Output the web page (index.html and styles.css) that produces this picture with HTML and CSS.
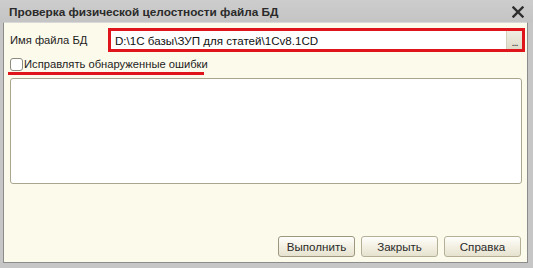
FILE: index.html
```html
<!DOCTYPE html>
<html lang="ru">
<head>
<meta charset="utf-8">
<title>Проверка физической целостности файла БД</title>
<link rel="stylesheet" href="styles.css">
</head>
<body>
<div class="window">
  <div class="titlebar">
    <span class="title">Проверка физической целостности файла БД</span>
    <svg class="close" width="12" height="12" viewBox="0 0 12 12"><path d="M1.5 1.5 L10.5 10.5 M10.5 1.5 L1.5 10.5" stroke="#2e2e2e" stroke-width="2.4" stroke-linecap="square"/></svg>
  </div>
  <div class="client">
    <div class="row file-row">
      <span class="label">Имя файла БД</span>
      <div class="input">
        <span class="value">D:\1C базы\ЗУП для статей\1Cv8.1CD</span>
        <span class="pick">...</span>
      </div>
    </div>
    <div class="row check-row">
      <span class="checkbox"></span>
      <span class="check-label">Исправлять обнаруженные ошибки</span>
    </div>
    <div class="underline"></div>
    <div class="textbox"></div>
    <div class="buttons">
      <button class="btn btn-default">Выполнить</button>
      <button class="btn">Закрыть</button>
      <button class="btn">Справка</button>
    </div>
  </div>
</div>
</body>
</html>
```

FILE: styles.css
```css
html, body {
  margin: 0;
  padding: 0;
}
body {
  background: #c6c6c6;
  font-family: "Liberation Sans", Arial, sans-serif;
  font-size: 11px;
  color: #1c1c1c;
}
.window {
  width: 533px;
  height: 268px;
  display: flex;
  flex-direction: column;
  background: #c6c6c6;
}
.titlebar {
  height: 22px;
  flex: none;
  display: flex;
  align-items: center;
  justify-content: space-between;
  padding: 0 9px 0 9px;
  background: linear-gradient(#cdcdcd, #c4c4c4);
}
.title {
  font-weight: bold;
  font-size: 11.8px;
  color: #2a2a2a;
  padding-top: 1px;
}
.close {
  display: block;
  margin-top: 1px;
}
.client {
  flex: 1;
  margin: 0 5px 5px 3px;
  border: 1px solid #8c8c8c;
  border-top-color: #d8d8d8;
  background: #fcfaeb;
  display: flex;
  flex-direction: column;
  min-height: 0;
}
.row {
  display: flex;
  align-items: center;
}
.file-row {
  height: 24px;
  margin-top: 5px;
  padding-left: 6px;
}
.label {
  width: 98px;
  flex: none;
  font-size: 11.2px;
}
.input {
  flex: 1;
  height: 24px;
  box-sizing: border-box;
  margin-right: 2px;
  border: 3px solid #e0141b;
  background: #fff;
  display: flex;
  align-items: stretch;
  padding-left: 4px;
}
.value {
  flex: 1;
  color: #111;
  font-size: 11.6px;
  display: flex;
  align-items: center;
}
.pick {
  width: 16px;
  box-sizing: border-box;
  border-left: 1px solid #d4d0bc;
  background: linear-gradient(#efede2, #dedbc9);
  font-size: 11px;
  line-height: 22px;
  text-align: center;
  letter-spacing: -1px;
  color: #333;
}
.check-row {
  height: 16px;
  margin-top: 4px;
  padding-left: 6px;
}
.checkbox {
  width: 13px;
  height: 13px;
  box-sizing: border-box;
  border: 1px solid #8d8b7e;
  border-radius: 3px;
  background: #fff;
  margin-right: 1px;
  flex: none;
}
.check-label {
  color: #1c1c1c;
  font-size: 11.2px;
}
.underline {
  width: 196px;
  height: 3px;
  margin: 0 0 0 4px;
  background: #e0141b;
}
.textbox {
  height: 106px;
  margin: 3px 5px 0 6px;
  box-sizing: border-box;
  border: 1px solid #aaa68e;
  border-radius: 3px;
  background: #fff;
}
.buttons {
  margin-top: auto;
  display: flex;
  justify-content: flex-end;
  gap: 6px;
  padding: 0 6px 5px 0;
}
.btn {
  width: 77px;
  height: 21px;
  box-sizing: border-box;
  border: 1px solid #b4af97;
  border-radius: 3px;
  background: linear-gradient(#fefefb, #f3f0e3 50%, #e6e2cf);
  font-family: "Liberation Sans", Arial, sans-serif;
  font-size: 11.6px;
  color: #2a2a2a;
  padding: 0;
  margin: 0;
}
.btn-default {
  border-color: #9d9780;
}
```
